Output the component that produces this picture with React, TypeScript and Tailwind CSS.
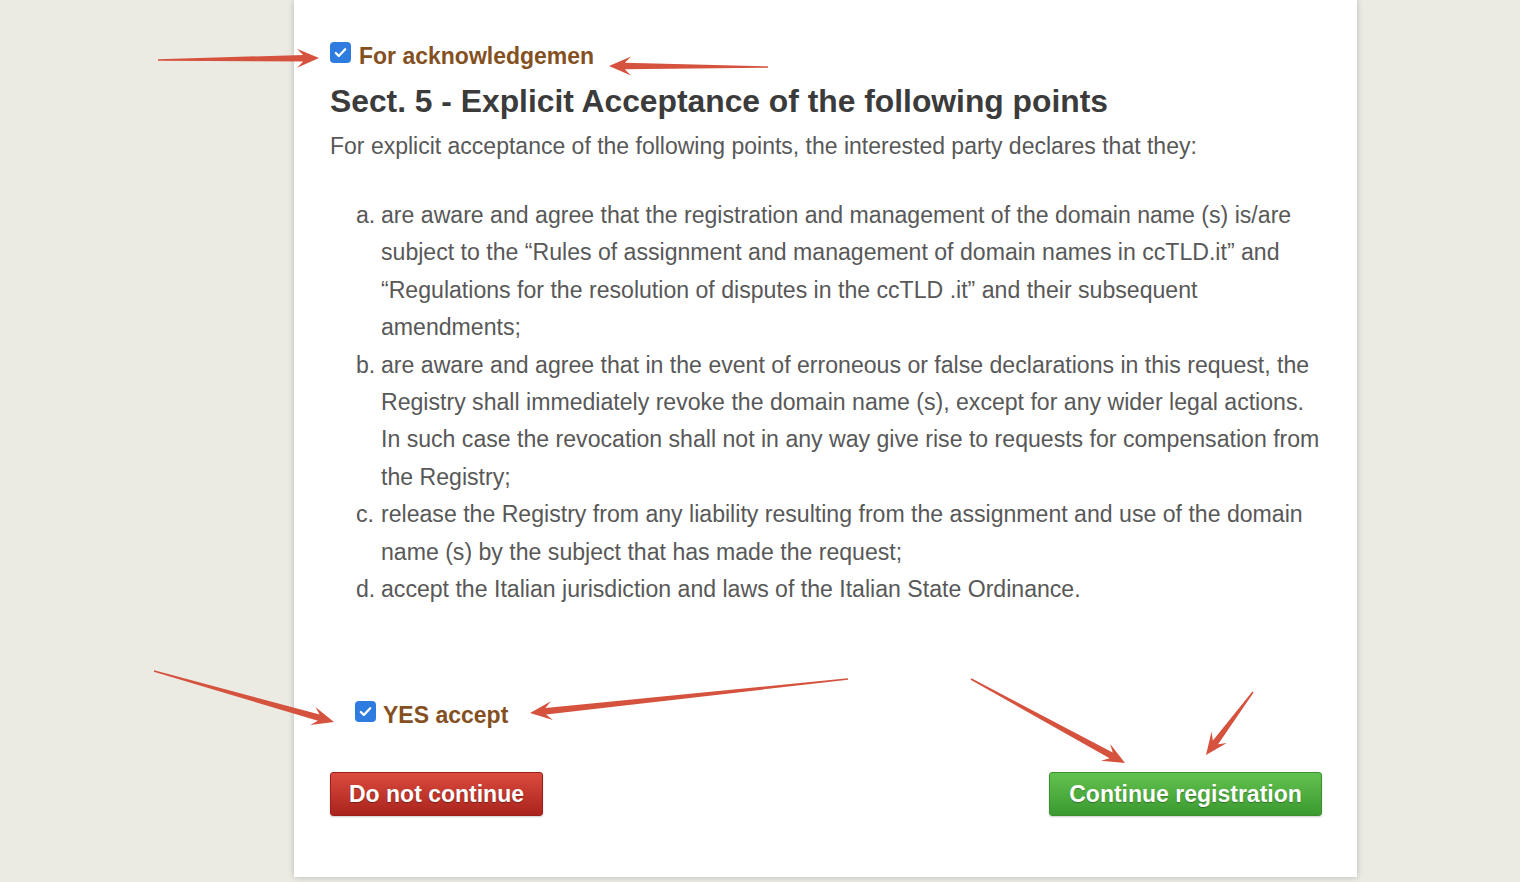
import React from "react";

const font = { fontFamily: '"Liberation Sans", Arial, sans-serif' };

type Pt = [number, number];

// tapered annotation arrow: thin tail, barbed head at `tip`
function arrowPoints(tail: Pt, tip: Pt, hl = 22, hw = 19, sw = 6.5, tw = 1.5) {
  const dx = tip[0] - tail[0];
  const dy = tip[1] - tail[1];
  const len = Math.hypot(dx, dy);
  const ux = dx / len;
  const uy = dy / len;
  const nx = -uy;
  const ny = ux;
  const join: Pt = [tip[0] - ux * hl * 0.72, tip[1] - uy * hl * 0.72];
  const barb: Pt = [tip[0] - ux * hl, tip[1] - uy * hl];
  const p = (b: Pt, w: number): string =>
    `${(b[0] + nx * w).toFixed(1)},${(b[1] + ny * w).toFixed(1)}`;
  return [
    p(tail, tw / 2),
    p(join, sw / 2),
    p(barb, hw / 2),
    `${tip[0]},${tip[1]}`,
    p(barb, -hw / 2),
    p(join, -sw / 2),
    p(tail, -tw / 2),
  ].join(" ");
}

const arrows: [Pt, Pt][] = [
  [[158, 60], [319, 58]],
  [[768, 67], [609, 66]],
  [[154, 671], [334, 722]],
  [[848, 679], [530, 713]],
  [[971, 679], [1125, 763]],
  [[1253, 692], [1206, 755]],
];

function Check() {
  return (
    <span className="flex h-[21px] w-[21px] shrink-0 items-center justify-center rounded-[4px] bg-[#2f7ce0]">
      <svg width="15" height="15" viewBox="0 0 16 16">
        <path d="M3 8.5l3.2 3.2L13 4.5" fill="none" stroke="#fff" strokeWidth="2.4" strokeLinecap="round" strokeLinejoin="round" />
      </svg>
    </span>
  );
}

const items = [
  "are aware and agree that the registration and management of the domain name (s) is/are subject to the \u201cRules of assignment and management of domain names in ccTLD.it\u201d and \u201cRegulations for the resolution of disputes in the ccTLD .it\u201d and their subsequent amendments;",
  "are aware and agree that in the event of erroneous or false declarations in this request, the Registry shall immediately revoke the domain name (s), except for any wider legal actions. In such case the revocation shall not in any way give rise to requests for compensation from the Registry;",
  "release the Registry from any liability resulting from the assignment and use of the domain name (s) by the subject that has made the request;",
  "accept the Italian jurisdiction and laws of the Italian State Ordinance.",
];

export default function App() {
  return (
    <div className="relative h-[882px] w-[1520px] overflow-hidden bg-[#ebebe4]" style={font}>
      <div className="ml-[294px] h-[877px] w-[1063px] bg-white pl-[36px] pr-[35px] pt-[41px] shadow-[0_0_6px_rgba(0,0,0,0.22)]">
        <div className="flex h-[28px] items-start gap-[8px]">
          <div className="pt-[1px]">
            <Check />
          </div>
          <span className="text-[23px] font-bold leading-[30px] text-[#84501f]">For acknowledgemen</span>
        </div>

        <h2 className="mt-[12px] text-[31.8px] font-bold leading-[40px] text-[#3b3b3b]">
          Sect. 5 - Explicit Acceptance of the following points
        </h2>
        <p className="mt-[11px] text-[23px] leading-[28px] text-[#585858]">
          For explicit acceptance of the following points, the interested party declares that they:
        </p>

        <ol className="mt-[37px] pl-[26px] text-[23.1px] leading-[37.4px] text-[#585858]">
          {items.map((t, i) => (
            <li key={i} className="flex">
              <span className="w-[25px] shrink-0">{"abcd"[i]}.</span>
              <span>{t}</span>
            </li>
          ))}
        </ol>

        <div className="ml-[25px] mt-[92px] flex h-[28px] items-start gap-[7px]">
          <div className="pt-[1px]">
            <Check />
          </div>
          <span className="text-[23px] font-bold leading-[30px] text-[#84501f]">YES accept</span>
        </div>

        <div className="mt-[44px] flex justify-between">
          <button className="h-[44px] w-[213px] rounded-[3px] border border-[#9a1f18] bg-gradient-to-b from-[#dc4a3e] to-[#a9231c] text-[23px] font-bold text-white [text-shadow:0_1px_1px_rgba(0,0,0,0.35)] shadow-[0_1px_2px_rgba(0,0,0,0.2)]">
            Do not continue
          </button>
          <button className="h-[44px] w-[273px] rounded-[3px] border border-[#3c8f2f] bg-gradient-to-b from-[#62c24f] to-[#3b9a2f] text-[23px] font-bold text-white [text-shadow:0_1px_1px_rgba(0,0,0,0.3)] shadow-[0_1px_2px_rgba(0,0,0,0.2)]">
            Continue registration
          </button>
        </div>
      </div>

      <svg className="pointer-events-none absolute left-0 top-0" width="1520" height="882">
        {arrows.map(([a, b], i) => (
          <polygon key={i} points={arrowPoints(a, b)} fill="#d5533e" />
        ))}
      </svg>
    </div>
  );
}
